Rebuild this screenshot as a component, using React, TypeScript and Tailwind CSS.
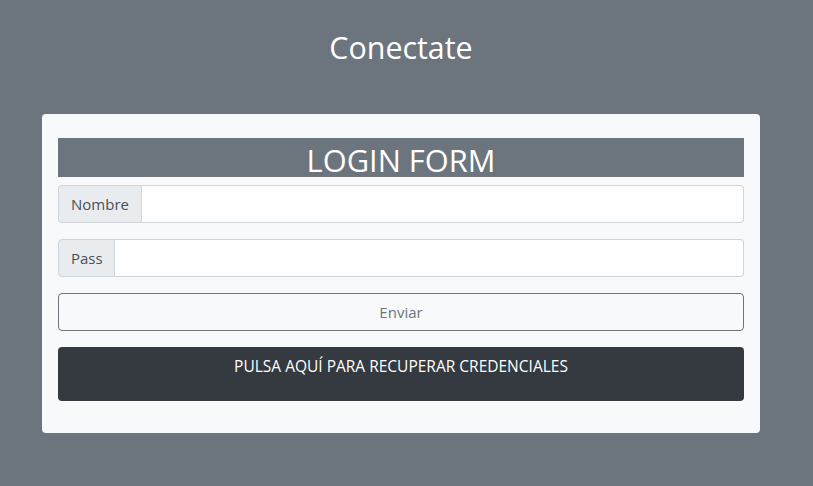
export default function App() {
  return (
    <div
      className="min-h-[486px] w-full bg-[#6c757d] pt-[28px]"
      style={{ fontFamily: '"Open Sans", "Noto Sans", sans-serif' }}
    >
      <div className="ml-[42px] w-[718px]">
        <h1 className="text-center text-[30.4px] leading-[40px] text-white">Conectate</h1>
        <div className="mt-[46px] rounded-[4px] bg-[#f8f9fa] px-4 pb-[32px] pt-[24px]">
          <div className="h-[39px] bg-[#6c757d] text-center text-[30.8px] leading-[44px] text-white">LOGIN FORM</div>
          <div className="mt-[8px] flex h-[38px]">
            <span className="flex items-center rounded-l-[4px] border border-[#ced4da] bg-[#e9ecef] px-3 text-[15px] text-[#495057]">
              Nombre
            </span>
            <input className="flex-1 rounded-r-[4px] border border-l-0 border-[#ced4da] bg-white outline-none" />
          </div>
          <div className="mt-[16px] flex h-[38px]">
            <span className="flex items-center rounded-l-[4px] border border-[#ced4da] bg-[#e9ecef] pl-3 pr-[11px] text-[15px] text-[#495057]">
              Pass
            </span>
            <input type="password" className="flex-1 rounded-r-[4px] border border-l-0 border-[#ced4da] bg-white outline-none" />
          </div>
          <button className="mt-[16px] block h-[38px] w-full rounded-[4px] border border-[#6c757d] bg-transparent text-center text-[15px] text-[#6c757d]">
            Enviar
          </button>
          <div className="mt-[16px] h-[54px] w-full rounded-[4px] bg-[#343a40] pt-[7px] text-center text-[15.5px] leading-[24px] text-white">
            PULSA AQUÍ PARA RECUPERAR CREDENCIALES
          </div>
        </div>
      </div>
    </div>
  );
}
